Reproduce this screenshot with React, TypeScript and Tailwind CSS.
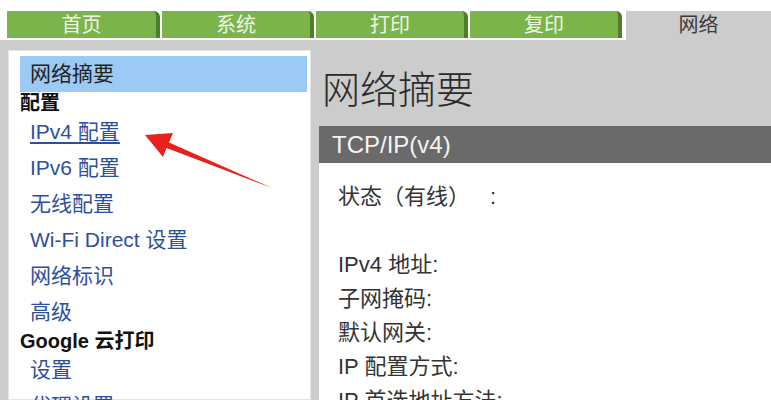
import React from "react";

const tabs = ["首页", "系统", "打印", "复印"];

const links1 = ["IPv6 配置", "无线配置", "Wi-Fi Direct 设置", "网络标识", "高级"];

export default function App() {
  return (
    <div className="relative w-[771px] h-[400px] overflow-hidden bg-white font-['Liberation_Sans','Noto_Sans_CJK_SC',sans-serif]">
      {/* top tabs */}
      <div className="flex items-start h-[40px] pt-[11px] pl-[7px]">
        {tabs.map((t, i) => (
          <div
            key={t}
            className={`h-[27px] ${i === 0 ? "w-[153px]" : "w-[152px]"} ${i === 3 ? "mr-[4px]" : "mr-[2px]"} flex items-center justify-center bg-[#7ab44b] border-r-[4px] border-[#4e7d2b] rounded-tr-[6px] text-[20px] text-[#eef7e2]`}
          >
            {t}
          </div>
        ))}
        <div className="h-[29px] flex-1 flex items-center justify-center bg-[#cccccc] text-[20px] text-[#3a3a3a] pb-[2px]">
          网络
        </div>
      </div>

      {/* body */}
      <div className="flex h-[360px] bg-[#cccccc] overflow-hidden">
        {/* sidebar */}
        <div className="ml-[8px] mt-[10px] w-[303px] shrink-0 bg-white border border-[#e4e4e4] pt-[5px] pr-[3px]">
          <div className="ml-[11px] h-[36px] flex items-center pl-[10px] bg-[#9ccaf5] text-[21px] text-[#222]">
            网络摘要
          </div>
          <div className="ml-[11px] h-[22px] flex items-center text-[20px] font-bold text-[#111]">配置</div>
          <div className="ml-[21px] h-[36px] flex items-center text-[21px] text-[#2d4f9f] underline underline-offset-[3px]">
            IPv4 配置
          </div>
          {links1.map((l) => (
            <div key={l} className="ml-[21px] h-[36px] flex items-center text-[21px] text-[#2d4f9f]">
              {l}
            </div>
          ))}
          <div className="ml-[11px] h-[22px] flex items-center text-[20px] font-bold text-[#111]">Google 云打印</div>
          <div className="ml-[21px] h-[36px] flex items-center text-[21px] text-[#2d4f9f]">设置</div>
          <div className="ml-[21px] h-[36px] flex items-center text-[21px] text-[#2d4f9f]">代理设置</div>
        </div>

        {/* main */}
        <div className="ml-[8px] flex-1 flex flex-col">
          <div className="h-[86px] shrink-0 pt-[30px] pl-[3px]">
            <div className="leading-[40px] text-[38px] text-[#2a2a2a] font-['Liberation_Serif','Noto_Sans_CJK_SC',serif] font-light">
              网络摘要
            </div>
          </div>
          <div className="h-[37px] shrink-0 flex items-center pl-[13px] bg-[#6a6a6a] text-[24px] text-[#f4f4f4]">
            TCP/IP(v4)
          </div>
          <div className="flex-1 min-h-0 overflow-hidden bg-white pl-[19px] pt-[17px] text-[22px] leading-[34px] text-[#333]">
            <div>
              状态（有线）<span className="ml-[20px]">:</span>
            </div>
            <div>&nbsp;</div>
            <div>IPv4 地址:</div>
            <div>子网掩码:</div>
            <div>默认网关:</div>
            <div>IP 配置方式:</div>
            <div>IP 首选地址方法:</div>
          </div>
        </div>
      </div>

      {/* red annotation arrow */}
      <svg className="absolute left-0 top-0 pointer-events-none" width="771" height="400" viewBox="0 0 771 400">
        <polygon
          points="145,135 173,133 169,142.5 272,188 166.5,148 163,157"
          fill="#e8211c"
        />
      </svg>
    </div>
  );
}
